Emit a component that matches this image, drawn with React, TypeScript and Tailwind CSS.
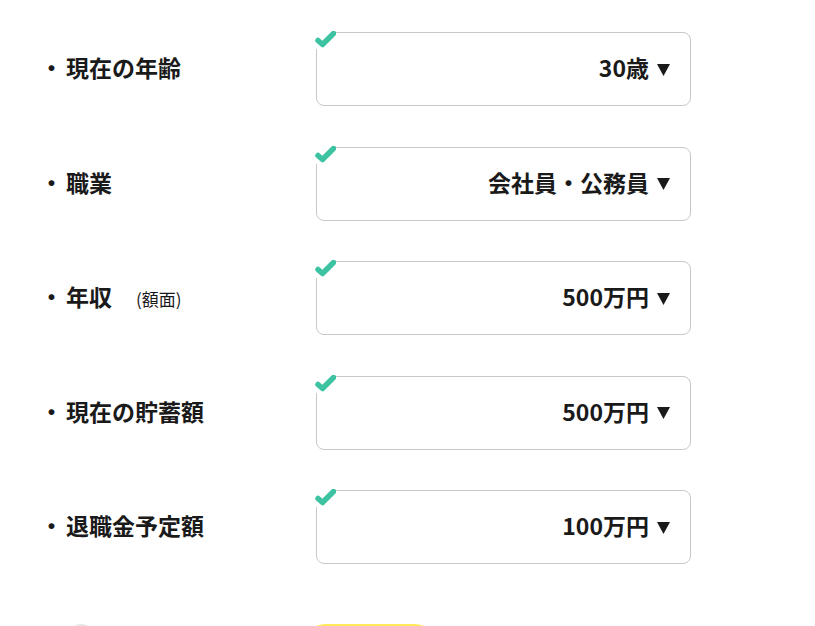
const rows = [
  { label: "現在の年齢", value: "30歳" },
  { label: "職業", value: "会社員・公務員" },
  { label: "年収", note: "(額面)", value: "500万円" },
  { label: "現在の貯蓄額", value: "500万円" },
  { label: "退職金予定額", value: "100万円" },
];

function Check() {
  return (
    <svg className="absolute -left-[2px] -top-[2px]" width="21" height="18" viewBox="0 0 21 18">
      <rect x="0" y="1" width="20" height="17" fill="#fff" />
      <path d="M3 9.5 L7.5 13.5 L18.5 2.5" fill="none" stroke="#3dc3a2" strokeWidth="5.5" strokeLinecap="round" strokeLinejoin="round" />
    </svg>
  );
}

function Caret() {
  return (
    <svg width="13" height="12" viewBox="0 0 13 12" className="ml-[8px] mt-[1px]">
      <polygon points="0,0 13,0 6.5,12" fill="#1a1a1a" />
    </svg>
  );
}

export default function App() {
  return (
    <div
      className="w-[815px] h-[626px] overflow-hidden bg-white text-[#1a1a1a]"
      style={{ fontFamily: '"Noto Sans CJK JP", "Noto Sans", sans-serif' }}
    >
      <div className="pt-[32px] flex flex-col gap-[40.5px]">
        {rows.map((r) => (
          <div key={r.label} className="flex items-center">
            <div className="w-[316px] pl-[40px] flex items-baseline leading-none -mt-[3px]">
              <span className="text-[23px] font-bold w-[26px]">・</span>
              <span className="text-[23px] font-bold">{r.label}</span>
              {r.note && <span className="ml-[24px] text-[17px]">{r.note}</span>}
            </div>
            <div className="relative w-[375px] h-[74px] border border-[#c8c8c8] rounded-lg flex items-center justify-end pr-[20px]">
              <Check />
              <span className="text-[23px] font-bold leading-none -mt-[3px]">{r.value}</span>
              <Caret />
            </div>
          </div>
        ))}
      </div>
      <div className="mt-[60px] flex items-start">
        <div className="ml-[67px] w-[28px] h-[28px] rounded-full bg-[#e6e6e6]" />
        <div className="ml-[210px] w-[130px] h-[40px] rounded-full bg-[#ffe95c]" />
      </div>
    </div>
  );
}
